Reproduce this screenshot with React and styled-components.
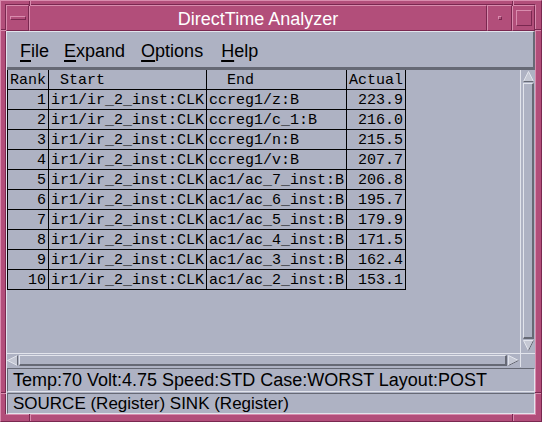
import React from 'react'
import styled, { createGlobalStyle } from 'styled-components'

const GRAY = '#aeb2c3'
const LIGHT = '#e2e4ec'
const DARK = '#666975'
const PINK = '#b24e7a'
const PINK_LIGHT = '#d98cae'
const PINK_DARK = '#7a2850'

const Global = createGlobalStyle`
  html, body {
    margin: 0;
    padding: 0;
    background: ${PINK};
  }
  #root {
    width: 542px;
    height: 422px;
  }
`

const Window = styled.div`
  position: relative;
  box-sizing: border-box;
  width: 542px;
  height: 422px;
  background: ${PINK};
  border-top: 1px solid ${PINK_LIGHT};
  border-left: 1px solid ${PINK_LIGHT};
  border-right: 1px solid ${PINK_DARK};
  border-bottom: 1px solid ${PINK_DARK};
  padding: 3px 5px 6px 4px;
  display: flex;
`

const Inner = styled.div`
  flex: 1;
  display: flex;
  flex-direction: column;
  border-top: 1px solid ${PINK_DARK};
  border-left: 1px solid ${PINK_DARK};
  border-right: 1px solid ${PINK_LIGHT};
  border-bottom: 1px solid ${PINK_LIGHT};
`

const Tick = styled.div`
  position: absolute;
  background: ${PINK_DARK};
  box-shadow: ${p => (p.$vertical ? `1px 0 0 ${PINK_LIGHT}` : `0 1px 0 ${PINK_LIGHT}`)};
  ${p => (p.$vertical ? 'width: 1px; height: 5px;' : 'width: 5px; height: 1px;')}
`

const TitleBar = styled.div`
  display: flex;
  height: 26px;
  background: ${PINK};
`

const TitleButton = styled.div`
  box-sizing: border-box;
  width: ${p => p.$w}px;
  flex: 0 0 auto;
  border-top: 1px solid ${PINK_LIGHT};
  border-left: 1px solid ${PINK_LIGHT};
  border-right: 1px solid ${PINK_DARK};
  border-bottom: 1px solid ${PINK_DARK};
  display: flex;
  align-items: center;
  justify-content: center;
`

const Title = styled.div`
  box-sizing: border-box;
  flex: 1;
  border-top: 1px solid ${PINK_LIGHT};
  border-left: 1px solid ${PINK_LIGHT};
  border-right: 1px solid ${PINK_DARK};
  border-bottom: 1px solid ${PINK_DARK};
  display: flex;
  align-items: center;
  justify-content: center;
  padding-top: 2px;
  color: #ffffff;
  font-family: "Liberation Sans", Arial, sans-serif;
  font-size: 18px;
`

const RaisedMark = styled.div`
  box-sizing: border-box;
  width: ${p => p.$w}px;
  height: ${p => p.$h}px;
  border-top: 1px solid ${PINK_LIGHT};
  border-left: 1px solid ${PINK_LIGHT};
  border-right: 1px solid ${PINK_DARK};
  border-bottom: 1px solid ${PINK_DARK};
`

const Client = styled.div`
  flex: 1;
  display: flex;
  flex-direction: column;
  background: ${GRAY};
  border-left: 1px solid ${LIGHT};
`

const MenuBar = styled.div`
  box-sizing: border-box;
  height: 39px;
  display: flex;
  align-items: center;
  padding: 4px 0 0 13px;
  border-top: 1px solid ${LIGHT};
  border-bottom: 3px solid ${DARK};
  border-right: 2px solid ${DARK};
  font-family: "Liberation Sans", Arial, sans-serif;
  font-size: 18px;
  color: #000;
`

const MenuItem = styled.span`
  white-space: pre;
  margin-right: ${p => p.$after}px;
  u {
    text-decoration: underline;
    text-underline-offset: 3px;
    text-decoration-thickness: 2px;
  }
`

const Scrolled = styled.div`
  display: grid;
  grid-template-columns: 1fr 15px;
  grid-template-rows: 283px 14px;
`

const Viewport = styled.div`
  overflow: hidden;
`

const Grid = styled.div`
  display: grid;
  grid-template-columns: 41px 158px 140px 59px;
  width: max-content;
  border-left: 1px solid #000;
  font-family: "Liberation Mono", "Courier New", monospace;
  font-size: 15px;
  color: #000;
`

const Cell = styled.div`
  box-sizing: border-box;
  height: 20px;
  border-right: 1px solid #000;
  border-bottom: 1px solid #000;
  padding: 2px ${p => (p.$right ? 2 : 0)}px 0 2px;
  line-height: 17px;
  text-align: ${p => (p.$right ? 'right' : 'left')};
  white-space: pre;
  overflow: hidden;
`

const VScroll = styled.div`
  box-sizing: border-box;
  display: flex;
  flex-direction: column;
  gap: 1px;
  border-left: 1px solid ${LIGHT};
  padding: 1px 1px 2px 2px;
`

const HScroll = styled.div`
  box-sizing: border-box;
  display: flex;
  gap: 1px;
  border-top: 1px solid ${LIGHT};
  padding: 1px 1px 1px 0;
`

const Thumb = styled.div`
  box-sizing: border-box;
  flex: 1;
  background: ${GRAY};
  border-top: 1px solid ${LIGHT};
  border-left: 1px solid ${LIGHT};
  border-right: 2px solid ${DARK};
  border-bottom: 2px solid ${DARK};
`

const CornerBox = styled.div`
  border-top: 1px solid ${LIGHT};
  border-left: 1px solid ${LIGHT};
`

const Status = styled.div`
  box-sizing: border-box;
  height: ${p => p.$h}px;
  margin-top: 1px;
  display: flex;
  align-items: center;
  padding-left: 5px;
  border-top: 1px solid ${DARK};
  border-left: 1px solid ${DARK};
  border-right: 1px solid ${LIGHT};
  border-bottom: 1px solid ${LIGHT};
  font-family: "Liberation Sans", Arial, sans-serif;
  font-size: ${p => p.$size}px;
  color: #000;
  white-space: pre;
`

const Arrow = ({ dir }) => {
  const pts = {
    up: [[5.5, 0.5], [10.5, 10.5], [0.5, 10.5]],
    down: [[0.5, 0.5], [10.5, 0.5], [5.5, 10.5]],
    left: [[0.5, 5.5], [10.5, 0.5], [10.5, 10.5]],
    right: [[0.5, 0.5], [10.5, 5.5], [0.5, 10.5]],
  }[dir]
  const d = pts.map(p => p.join(',')).join(' ')
  return (
    <svg width="11" height="11" viewBox="0 0 11 11" style={{ display: 'block', flex: '0 0 auto' }}>
      <polygon points={d} fill="#c5c8d4" stroke={LIGHT} strokeWidth="1" />
      <polyline
        points={`${pts[1].join(',')} ${pts[2].join(',')}`}
        fill="none"
        stroke={DARK}
        strokeWidth="1"
      />
    </svg>
  )
}

const rows = [
  ['1', 'ccreg1/z:B', '223.9'],
  ['2', 'ccreg1/c_1:B', '216.0'],
  ['3', 'ccreg1/n:B', '215.5'],
  ['4', 'ccreg1/v:B', '207.7'],
  ['5', 'ac1/ac_7_inst:B', '206.8'],
  ['6', 'ac1/ac_6_inst:B', '195.7'],
  ['7', 'ac1/ac_5_inst:B', '179.9'],
  ['8', 'ac1/ac_4_inst:B', '171.5'],
  ['9', 'ac1/ac_3_inst:B', '162.4'],
  ['10', 'ac1/ac_2_inst:B', '153.1'],
]

const menus = [
  ['F', 'ile', 15],
  ['E', 'xpand', 16],
  ['O', 'ptions', 18],
  ['H', 'elp', 0],
]

const App = () => {
  return (
    <>
      <Global />
      <Window>
        <Tick $vertical style={{ left: 28, top: 0 }} />
        <Tick $vertical style={{ left: 511, top: 0 }} />
        <Tick $vertical style={{ left: 28, bottom: 0, height: 7 }} />
        <Tick $vertical style={{ left: 511, bottom: 0, height: 7 }} />
        <Tick style={{ left: 0, top: 28 }} />
        <Tick style={{ left: 0, top: 391 }} />
        <Tick style={{ right: 0, top: 28, width: 6 }} />
        <Tick style={{ right: 0, top: 391, width: 6 }} />
        <Inner>
          <TitleBar>
            <TitleButton $w={23}>
              <RaisedMark $w={16} $h={4} />
            </TitleButton>
            <Title>DirectTime Analyzer</Title>
            <TitleButton $w={25}>
              <RaisedMark $w={4} $h={4} />
            </TitleButton>
            <TitleButton $w={23}>
              <RaisedMark $w={16} $h={16} />
            </TitleButton>
          </TitleBar>
          <Client>
            <MenuBar>
              {menus.map(([k, rest, after]) => (
                <MenuItem key={k} $after={after}>
                  <u>{k}</u>
                  {rest}
                </MenuItem>
              ))}
            </MenuBar>
            <Scrolled>
              <Viewport>
                <Grid>
                  <Cell>Rank</Cell>
                  <Cell> Start</Cell>
                  <Cell>  End</Cell>
                  <Cell>Actual</Cell>
                  {rows.map(([rank, end, actual]) => (
                    <React.Fragment key={rank}>
                      <Cell $right>{rank}</Cell>
                      <Cell>ir1/ir_2_inst:CLK</Cell>
                      <Cell>{end}</Cell>
                      <Cell $right>{actual}</Cell>
                    </React.Fragment>
                  ))}
                </Grid>
              </Viewport>
              <VScroll>
                <Arrow dir="up" />
                <Thumb />
                <Arrow dir="down" />
              </VScroll>
              <HScroll>
                <Arrow dir="left" />
                <Thumb />
                <Arrow dir="right" />
              </HScroll>
              <CornerBox />
            </Scrolled>
            <Status $h={24} $size={18}>Temp:70 Volt:4.75 Speed:STD Case:WORST Layout:POST</Status>
            <Status $h={21} $size={17}>SOURCE (Register) SINK (Register)</Status>
          </Client>
        </Inner>
      </Window>
    </>
  )
}

export default App
